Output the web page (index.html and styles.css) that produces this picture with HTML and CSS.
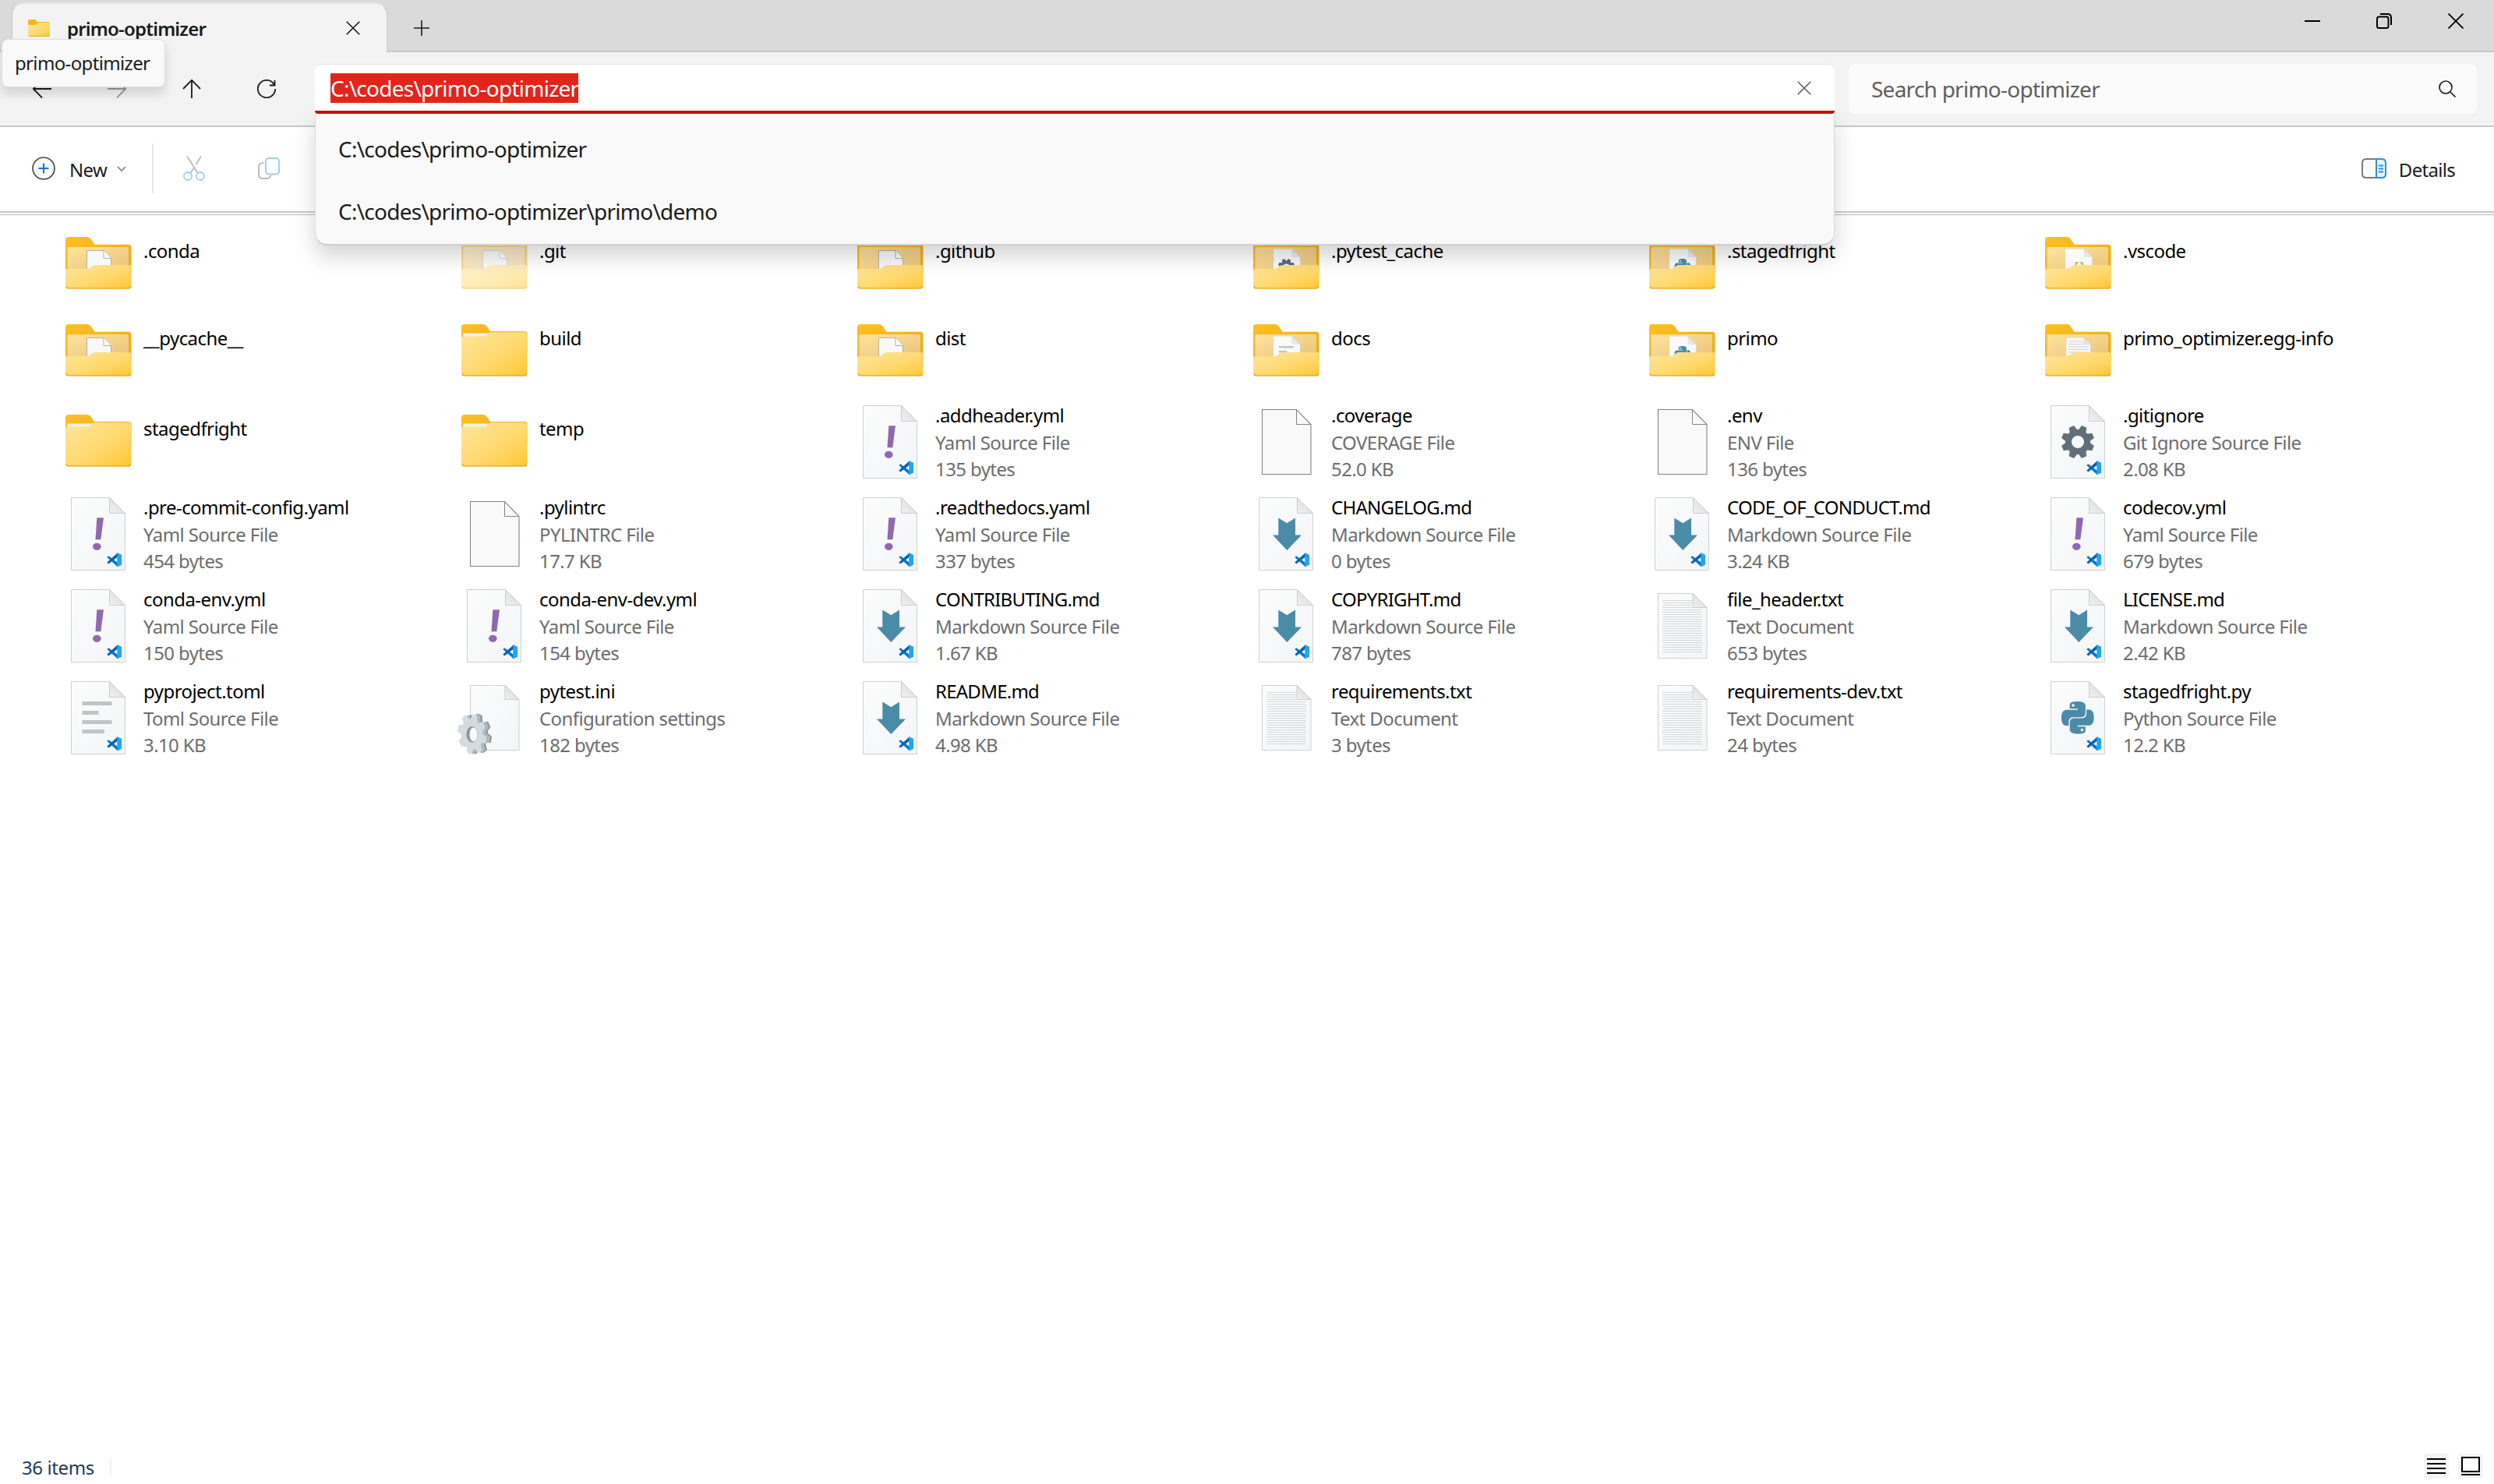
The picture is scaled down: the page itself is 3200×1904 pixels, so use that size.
FILE: index.html
```html
<!DOCTYPE html>
<html lang="en">
<head>
<meta charset="utf-8">
<title>primo-optimizer</title>
<link rel="stylesheet" href="styles.css">
</head>
<body>
<svg class="defs" aria-hidden="true">
  <defs>
    <linearGradient id="gFront" x1="0" y1="0" x2="1" y2="1"><stop offset="0" stop-color="#ffe69c"/><stop offset=".55" stop-color="#ffd970"/><stop offset="1" stop-color="#ffc633"/></linearGradient>
    <linearGradient id="gBack" x1="0" y1="0" x2="1" y2="1"><stop offset="0" stop-color="#ffc021"/><stop offset="1" stop-color="#eaa81b"/></linearGradient>
    <linearGradient id="gInner" x1="0" y1="0" x2="1" y2="1"><stop offset="0" stop-color="#ffe4a0"/><stop offset="1" stop-color="#e9c277"/></linearGradient>
    <linearGradient id="gPage" x1="0" y1="0" x2="1" y2="1"><stop offset="0" stop-color="#fcfcfc"/><stop offset="1" stop-color="#f3f5f7"/></linearGradient>
    <linearGradient id="gFold" x1="0" y1="1" x2="1" y2="0"><stop offset="0" stop-color="#f1f1f1"/><stop offset="1" stop-color="#d6d6d6"/></linearGradient>
    <pattern id="lines" width="51" height="3" patternUnits="userSpaceOnUse"><rect width="51" height="1" fill="#d3d6d8"/></pattern>
  </defs>
  <symbol id="folder" viewBox="0 0 96 96">
    <path d="M6 17a4 4 0 0 1 4-4h24q3 0 5 3l4.500 6.700H87a3.500 3.500 0 0 1 3.500 3.500V50H6z" fill="url(#gBack)"/>
    <path d="M8 24.500h34l-5 5.500H8z" fill="#f1f1ee"/>
    <path d="M6 31q0-2.500 2.500-2.500H35q2.500 0 4-1.500l3-3q1.500-1.700 4-1.700h41.500q3 0 3 3V76q0 3.500-3.500 3.500H9.500Q6 79.500 6 76z" fill="url(#gFront)"/>
    <path d="M7 76.500q.5 2.300 3 2.300h76.500q2.500 0 3-2.300" fill="none" stroke="#eaa627" stroke-width="1.300"/>
    <path d="M42 22.700h45.500q2.300 0 2.800 2" fill="none" stroke="#e6ae35" stroke-width="1"/>
  </symbol>
  <symbol id="openBack" viewBox="0 0 96 96">
    <path d="M6 17a4 4 0 0 1 4-4h24q3 0 5 3l4.500 6.700H87a3.500 3.500 0 0 1 3.500 3.500V60H6z" fill="url(#gBack)"/>
    <path d="M8.500 28q0-2 2-2H85q2 0 2 2v28H8.500z" fill="url(#gInner)"/>
  </symbol>
  <symbol id="openFront" viewBox="0 0 96 96">
    <path d="M6 56.500q0-2.500 2.500-2.500H33q2.500 0 4-1.500l3-2q1.700-1.500 4-1.500h43.500q3 0 3 3V76q0 3.500-3.500 3.500H9.500Q6 79.500 6 76z" fill="url(#gFront)"/>
    <path d="M7 76.500q.5 2.300 3 2.300h76.500q2.500 0 3-2.300" fill="none" stroke="#eaa627" stroke-width="1.300"/>
  </symbol>
  <symbol id="smallPage" viewBox="0 0 96 96">
    <path d="M33.500 30.500h21.500l9.500 10V60h-31z" fill="#f8f8f8" stroke="#a2a2a2" stroke-width=".8"/>
    <path d="M55 30.500v10h9.500" fill="#fdfdfd" stroke="#9c9c9c" stroke-width=".8"/>
  </symbol>
  <symbol id="page" viewBox="0 0 96 96">
    <path d="M13.500 1.500h49l20 20V94.500h-69z" fill="url(#gPage)" stroke="#cfd0d1"/>
    <path d="M62.500 1.500l20 20h-20z" fill="url(#gFold)" stroke="#c4c4c4" stroke-width=".8"/>
  </symbol>
  <symbol id="code" viewBox="0 0 96 96">
    <path d="M59.300 78l2-1.800L73 85v5.300z" fill="#0078c8"/>
    <path d="M59.300 84.600l2 1.800L73 77.600v-5.300z" fill="#0065a9"/>
    <path d="M72.500 72.300L78 74.800v13l-5.500 2.500-1-.8.800-1V74l-.8-.9z" fill="#22a4f0"/>
  </symbol>
  <symbol id="blank" viewBox="0 0 96 96">
    <path d="M17.500 6.500h44l18.500 19V89.500H17.500z" fill="#f9f9f9" stroke="#858585" stroke-width="1.100"/>
    <path d="M61.500 6.500v19H80" fill="none" stroke="#858585"/>
  </symbol>
  <symbol id="text" viewBox="0 0 96 96">
    <path d="M17.500 6.500H62l18 18v65H17.500z" fill="url(#gPage)" stroke="#cfd0d1"/>
    <path d="M23.500 13H61v12h12.500v58h-50z" fill="url(#lines)"/>
    <path d="M62 6.500l18 18H62z" fill="url(#gFold)" stroke="#c4c4c4" stroke-width=".8"/>
  </symbol>
  <symbol id="yamlMark" viewBox="0 0 96 96">
    <path d="M46.300 27.300H55l-3.700 28h-6.800z" fill="#9068b0"/><ellipse cx="46.300" cy="64.300" rx="5.300" ry="4.600" fill="#9068b0"/>
  </symbol>
  <symbol id="mdMark" viewBox="0 0 96 96">
    <path d="M38.300 27.500l11 6.800L60 27.500v22h8L49.300 69 31 49.500h7.300z" fill="#4a8ba8"/>
  </symbol>
  <symbol id="pyMark" viewBox="0 0 96 96">
    <path transform="translate(27 27) scale(1.730)" fill="#4a8ba8" d="M14.250.18l.9.2.73.26.59.3.45.32.34.34.25.34.16.33.1.3.04.26.02.2-.01.13V8.500l-.05.63-.13.55-.21.46-.26.38-.3.31-.33.25-.35.19-.35.14-.33.1-.3.07-.26.04-.21.02H8.770l-.69.05-.59.14-.5.22-.41.27-.33.32-.27.35-.2.36-.15.37-.1.35-.07.32-.04.27-.02.21v3.060H3.170l-.21-.03-.28-.07-.32-.12-.35-.18-.36-.26-.36-.36-.35-.46-.32-.59-.28-.73-.21-.88-.14-1.050-.05-1.230.06-1.220.16-1.040.24-.87.32-.71.36-.57.4-.44.42-.33.42-.24.4-.16.36-.1.32-.05.24-.01h.16l.06.01h8.160v-.83H6.180l-.01-2.750-.02-.37.05-.34.11-.31.17-.28.25-.26.31-.23.38-.2.44-.18.51-.15.58-.12.64-.1.71-.06.77-.04.84-.02 1.270.05zm-6.300 1.980l-.23.33-.08.41.08.41.23.34.33.22.41.09.41-.09.33-.22.23-.34.08-.41-.08-.41-.23-.33-.33-.22-.41-.09-.41.09zm13.090 3.950l.28.06.32.12.35.18.36.27.36.35.35.47.32.59.28.73.21.88.14 1.040.05 1.230-.06 1.230-.16 1.040-.24.86-.32.71-.36.57-.4.45-.42.33-.42.24-.4.16-.36.09-.32.05-.24.02-.16-.01h-8.220v.82h5.840l.01 2.760.02.36-.05.34-.11.31-.17.29-.25.25-.31.24-.38.2-.44.17-.51.15-.58.13-.64.09-.71.07-.77.04-.84.01-1.270-.04-1.070-.14-.9-.2-.73-.25-.59-.3-.45-.33-.34-.34-.25-.34-.16-.33-.1-.3-.04-.25-.02-.2.01-.13v-5.340l.05-.64.13-.54.21-.46.26-.38.3-.32.33-.24.35-.2.35-.14.33-.1.3-.06.26-.04.21-.02.13-.01h5.840l.69-.05.59-.14.5-.21.41-.28.33-.32.27-.35.2-.36.15-.36.1-.35.07-.32.04-.28.02-.21V6.070h2.090l.14.01zm-6.470 14.250l-.23.33-.08.41.08.41.23.33.33.23.41.08.41-.08.33-.23.23-.33.08-.41-.08-.41-.23-.33-.33-.23-.41-.08-.41.08z"/>
  </symbol>
  <symbol id="tomlMark" viewBox="0 0 96 96">
    <path d="M27.500 27h38v5h-38zM27.500 39h21v5h-21zM27.500 51h38v5h-38zM27.500 63h28.500v5H27.500z" fill="#c1c4c3"/>
  </symbol>
  <symbol id="gearMark" viewBox="-24 -24 48 48">
    <g id="cog">
      <circle r="12" fill="none" stroke="currentColor" stroke-width="8"/>
      <g fill="currentColor">
        <path id="t" transform="rotate(22.500)" d="M-5.200-14l1.700-7.200h7L5.200-14z"/>
        <use href="#t" transform="rotate(45)"/><use href="#t" transform="rotate(90)"/><use href="#t" transform="rotate(135)"/><use href="#t" transform="rotate(180)"/><use href="#t" transform="rotate(225)"/><use href="#t" transform="rotate(270)"/><use href="#t" transform="rotate(315)"/>
      </g>
    </g>
  </symbol>

  <symbol id="fPage" viewBox="0 0 96 96"><use href="#openBack"/><use href="#smallPage"/><use href="#openFront"/></symbol>
  <symbol id="fGear" viewBox="0 0 96 96"><use href="#openBack"/><use href="#page" x="25" y="27.500" width="48" height="48"/><use href="#gearMark" x="36.500" y="39.500" width="24" height="24" color="#5c6d75"/><use href="#openFront"/></symbol>
  <symbol id="fPy" viewBox="0 0 96 96"><use href="#openBack"/><g transform="translate(25 27.500) scale(.5)"><use href="#page" width="96" height="96"/><use href="#pyMark" width="96" height="96"/></g><use href="#openFront"/></symbol>
  <symbol id="fToml" viewBox="0 0 96 96"><use href="#openBack"/><g transform="translate(25 27.500) scale(.5)"><use href="#page" width="96" height="96"/><use href="#tomlMark" width="96" height="96"/></g><use href="#openFront"/></symbol>
  <symbol id="fJson" viewBox="0 0 96 96"><use href="#openBack"/><use href="#page" x="25" y="27.500" width="48" height="48"/><text x="41" y="55" class="braces">{}</text><use href="#openFront"/></symbol>
  <symbol id="fText" viewBox="0 0 96 96"><use href="#openBack"/><path d="M33 30h22l9.500 9.500V60H33z" fill="#f8f8f8" stroke="#d5d5d5" stroke-width=".8"/><path d="M36 35h18M36 38.500h18M36 42h25.500M36 45.500h25.500M36 49h25.500" stroke="#d0d0d0"/><path d="M55 30v9.500h9.500z" fill="#e3e3e3"/><use href="#openFront"/></symbol>
  <symbol id="yaml" viewBox="0 0 96 96"><use href="#page"/><use href="#yamlMark"/><use href="#code"/></symbol>
  <symbol id="md" viewBox="0 0 96 96"><use href="#page"/><use href="#mdMark"/><use href="#code"/></symbol>
  <symbol id="py" viewBox="0 0 96 96"><use href="#page"/><use href="#pyMark"/><use href="#code"/></symbol>
  <symbol id="toml" viewBox="0 0 96 96"><use href="#page"/><use href="#tomlMark"/><use href="#code"/></symbol>
  <symbol id="git" viewBox="0 0 96 96"><use href="#page"/><use href="#gearMark" x="24" y="24" width="48" height="48" color="#617078"/><use href="#code"/></symbol>
  <symbol id="ini" viewBox="0 0 96 96">
    <path d="M17.500 6.500H62l18 18v65H17.500z" fill="url(#gPage)" stroke="#cfd0d1"/>
    <path d="M62 6.500l18 18H62z" fill="url(#gFold)" stroke="#c4c4c4" stroke-width=".8"/>
    <g color="#8d9599"><use href="#cog" transform="translate(26 68.500) rotate(-8) scale(.88 1.220)"/></g>
    <g color="#b0b8bd"><use href="#cog" transform="translate(23.500 68.800) rotate(-8) scale(.9 1.230)"/></g>
    <g color="#d3dbe1"><use href="#cog" transform="translate(19.700 69) rotate(-8) scale(.86 1.230)"/></g>
    <ellipse cx="19.700" cy="69.300" rx="7.300" ry="10.300" fill="#8f9599"/><ellipse cx="21.500" cy="69.300" rx="5" ry="9" fill="#f8f9fa"/>
  </symbol>
</svg>

<div class="window">
  <header class="titlebar">
    <div class="tab">
      <svg class="tab-icon" viewBox="0 0 28 24"><path d="M0 3q0-2 2-2h7l3 3h14q2 0 2 2v16H0z" fill="#f9b51c"/><path d="M0 8h10l3-3h13q2 0 2 2v14q0 2-2 2H2q-2 0-2-2z" fill="url(#gFront)"/><path d="M.5 22.300h27" stroke="#eaa627"/></svg>
      <span class="tab-title">primo-optimizer</span>
      <svg class="tab-close" viewBox="0 0 18 18"><path d="M.7.7l16.600 16.600M17.300.7L.7 17.300"/></svg>
    </div>
    <svg class="tab-add" viewBox="0 0 20 20"><path d="M10 0v20M0 10h20"/></svg>
    <div class="controls">
      <svg viewBox="0 0 20 20"><path d="M0 10h20" stroke-width="2"/></svg>
      <svg viewBox="0 0 20 20"><rect x="1" y="4.500" width="14.500" height="14.500" rx="2.500" stroke-width="2"/><path d="M5 1h9.500q4.500 0 4.500 4.500V15" stroke-width="2"/></svg>
      <svg viewBox="0 0 20 20"><path d="M.5.500l19 19M19.500.500l-19 19" stroke-width="1.800"/></svg>
    </div>
  </header>

  <div class="toolbar">
    <nav class="nav">
      <svg viewBox="0 0 24 24"><path d="M24 12H1M12 .500L.800 12 12 23.500"/></svg>
      <svg viewBox="0 0 24 24" class="off"><path d="M0 12h23M12 .500L23.200 12 12 23.500"/></svg>
      <svg viewBox="0 0 24 24"><path d="M12 24V1M1 12L12 .800 23 12"/></svg>
      <svg viewBox="0 0 24 24"><path d="M22 7A11.200 11.200 0 1 0 23.200 12M22.500 1v6.500H16"/></svg>
    </nav>
    <div class="address">
      <span class="path">C:\codes\primo-optimizer</span>
      <svg class="clear" viewBox="0 0 18 18"><path d="M.7.7l16.600 16.600M17.300.7L.7 17.300"/></svg>
      <ul class="suggestions">
        <li>C:\codes\primo-optimizer</li>
        <li>C:\codes\primo-optimizer\primo\demo</li>
      </ul>
    </div>
    <div class="search">
      <span>Search primo-optimizer</span>
      <svg viewBox="0 0 22 22"><circle cx="9" cy="9" r="8"/><path d="M15 15l6.500 6.500"/></svg>
    </div>
    <div class="tooltip">primo-optimizer</div>
  </div>

  <div class="commands">
    <svg class="ic-new" viewBox="0 0 30 30"><circle cx="15" cy="15" r="14" fill="#fafafa" stroke="#4d4d4d" stroke-width="1.700"/><path d="M15 8.500v13M8.500 15h13" stroke="#0078d4" stroke-width="2"/></svg>
    <span class="new">New</span>
    <svg class="chev" viewBox="0 0 12 7"><path d="M1 1l5 5 5-5"/></svg>
    <i class="rule"></i>
    <svg class="ic-cut" viewBox="0 0 28 32"><path d="M5 .500l13.500 21M23 .500L16.500 11M14.500 14.500l-5 7" stroke="#b9b9b9"/><circle cx="6" cy="26" r="5" stroke="#9fcdf1"/><circle cx="22" cy="26" r="5" stroke="#9fcdf1"/></svg>
    <svg class="ic-copy" viewBox="0 0 28 28"><path d="M7.500 7Q1 7 1 12v10q0 5 5 5h5q4.500 0 5.500-4" stroke="#bcbcbc"/><rect x="10" y="1" width="17" height="20.500" rx="4" stroke="#9fcdf1"/></svg>
    <svg class="ic-details" viewBox="0 0 32 26"><path d="M19 1H6Q1 1 1 6v14q0 5 5 5h13" fill="#fafafa" stroke="#7b7b7b"/><path d="M19 1h7q5 0 5 5v14q0 5-5 5h-7z" fill="#e8f4fd" stroke="#2b8fe0"/><path d="M22 9.500h6M22 13.500h6M22 17.500h6" stroke="#2b8fe0"/></svg>
    <span class="details">Details</span>
  </div>

  <main class="files">
    <div class="item folder"><svg><use href="#fPage"/></svg><p>.conda</p></div>
    <div class="item folder hidden"><svg><use href="#fPage"/></svg><p>.git</p></div>
    <div class="item folder"><svg><use href="#fPage"/></svg><p>.github</p></div>
    <div class="item folder"><svg><use href="#fGear"/></svg><p>.pytest_cache</p></div>
    <div class="item folder"><svg><use href="#fPy"/></svg><p>.stagedfright</p></div>
    <div class="item folder"><svg><use href="#fJson"/></svg><p>.vscode</p></div>

    <div class="item folder"><svg><use href="#fPage"/></svg><p>__pycache__</p></div>
    <div class="item folder"><svg><use href="#folder"/></svg><p>build</p></div>
    <div class="item folder"><svg><use href="#fPage"/></svg><p>dist</p></div>
    <div class="item folder"><svg><use href="#fToml"/></svg><p>docs</p></div>
    <div class="item folder"><svg><use href="#fPy"/></svg><p>primo</p></div>
    <div class="item folder"><svg><use href="#fText"/></svg><p>primo_optimizer.egg-info</p></div>

    <div class="item folder"><svg><use href="#folder"/></svg><p>stagedfright</p></div>
    <div class="item folder"><svg><use href="#folder"/></svg><p>temp</p></div>
    <div class="item"><svg><use href="#yaml"/></svg><p>.addheader.yml<small>Yaml Source File</small><small>135 bytes</small></p></div>
    <div class="item"><svg><use href="#blank"/></svg><p>.coverage<small>COVERAGE File</small><small>52.0 KB</small></p></div>
    <div class="item"><svg><use href="#blank"/></svg><p>.env<small>ENV File</small><small>136 bytes</small></p></div>
    <div class="item"><svg><use href="#git"/></svg><p>.gitignore<small>Git Ignore Source File</small><small>2.08 KB</small></p></div>

    <div class="item"><svg><use href="#yaml"/></svg><p>.pre-commit-config.yaml<small>Yaml Source File</small><small>454 bytes</small></p></div>
    <div class="item"><svg><use href="#blank"/></svg><p>.pylintrc<small>PYLINTRC File</small><small>17.7 KB</small></p></div>
    <div class="item"><svg><use href="#yaml"/></svg><p>.readthedocs.yaml<small>Yaml Source File</small><small>337 bytes</small></p></div>
    <div class="item caps"><svg><use href="#md"/></svg><p>CHANGELOG.md<small>Markdown Source File</small><small>0 bytes</small></p></div>
    <div class="item caps"><svg><use href="#md"/></svg><p>CODE_OF_CONDUCT.md<small>Markdown Source File</small><small>3.24 KB</small></p></div>
    <div class="item"><svg><use href="#yaml"/></svg><p>codecov.yml<small>Yaml Source File</small><small>679 bytes</small></p></div>

    <div class="item"><svg><use href="#yaml"/></svg><p>conda-env.yml<small>Yaml Source File</small><small>150 bytes</small></p></div>
    <div class="item"><svg><use href="#yaml"/></svg><p>conda-env-dev.yml<small>Yaml Source File</small><small>154 bytes</small></p></div>
    <div class="item caps"><svg><use href="#md"/></svg><p>CONTRIBUTING.md<small>Markdown Source File</small><small>1.67 KB</small></p></div>
    <div class="item caps"><svg><use href="#md"/></svg><p>COPYRIGHT.md<small>Markdown Source File</small><small>787 bytes</small></p></div>
    <div class="item"><svg><use href="#text"/></svg><p>file_header.txt<small>Text Document</small><small>653 bytes</small></p></div>
    <div class="item caps"><svg><use href="#md"/></svg><p>LICENSE.md<small>Markdown Source File</small><small>2.42 KB</small></p></div>

    <div class="item"><svg><use href="#toml"/></svg><p>pyproject.toml<small>Toml Source File</small><small>3.10 KB</small></p></div>
    <div class="item"><svg><use href="#ini"/></svg><p>pytest.ini<small>Configuration settings</small><small>182 bytes</small></p></div>
    <div class="item caps"><svg><use href="#md"/></svg><p>README.md<small>Markdown Source File</small><small>4.98 KB</small></p></div>
    <div class="item"><svg><use href="#text"/></svg><p>requirements.txt<small>Text Document</small><small>3 bytes</small></p></div>
    <div class="item"><svg><use href="#text"/></svg><p>requirements-dev.txt<small>Text Document</small><small>24 bytes</small></p></div>
    <div class="item"><svg><use href="#py"/></svg><p>stagedfright.py<small>Python Source File</small><small>12.2 KB</small></p></div>
  </main>

  <footer class="status">
    <span>36 items</span><i></i>
    <svg viewBox="0 0 32 32"><path d="M4 7h24M4 13h24M4 19h24M4 25h24"/></svg>
    <svg viewBox="0 0 32 32"><rect x="5" y="5" width="22" height="18" fill="#fff"/><path d="M4 27h24"/></svg>
  </footer>
</div>
</body>
</html>
```
FILE: styles.css
```css
* { box-sizing: border-box; }
body {
  margin: 0;
  background: #fff;
  color: #1b1b1b;
  font-family: "Noto Sans", "Open Sans", sans-serif;
  font-size: 24px;
}
svg { display: block; flex: none; fill: none; stroke: none; }
.defs { position: absolute; width: 0; height: 0; }
.window { width: 3200px; height: 1904px; display: flex; flex-direction: column; overflow: hidden; }

.titlebar {
  height: 67px;
  flex: none;
  display: flex;
  align-items: flex-start;
  background: #dadada;
  padding-left: 15px;
  box-shadow: inset 0 -2px #c9c9c9;
}
.tab {
  width: 482px;
  height: 64px;
  margin-top: 3px;
  display: flex;
  align-items: center;
  background: #f3f3f3;
  border: 1px solid #c9c9c9;
  border-top: 2px solid #e4e4e4;
  border-bottom: 0;
  border-radius: 16px 16px 0 0;
  padding: 0 34px 0 20px;
}
.tab-icon { width: 28px; height: 24px; }
.tab-title { margin-left: 22px; margin-top: 2px; font-weight: 600; line-height: 34px; letter-spacing: -0.8px; }
.tab-close { width: 18px; height: 18px; margin-left: auto; stroke: #1b1b1b; stroke-width: 1.6; }
.tab-add { width: 20px; height: 20px; margin: 26px 0 0 34px; stroke: #1b1b1b; stroke-width: 1.6; }
.controls { margin: 17px 39px 0 auto; display: flex; gap: 72px; }
.controls svg { width: 20px; height: 20px; stroke: #000; }

.toolbar {
  position: relative;
  height: 96px;
  flex: none;
  display: flex;
  align-items: flex-start;
  background: #f3f3f3;
  border-bottom: 2px solid #c8c8c8;
  padding-top: 15px;
}
.nav { display: flex; gap: 72px; padding: 20px 0 0 42px; width: 404px; flex: none; }
.nav svg { width: 24px; height: 24px; stroke: #1b1b1b; stroke-width: 1.8; }
.nav .off { stroke: #9a9a9a; }
.address {
  position: relative;
  width: 1950px;
  height: 64px;
  display: flex;
  align-items: center;
  background: #fff;
  border-top: 1px solid #e6e6e6;
  border-bottom: 4px solid #c41411;
  border-radius: 8px 8px 4px 4px;
  padding: 0 30px 0 20px;
}
.path { height: 38px; line-height: 38px; font-size: 28px; letter-spacing: -0.75px; color: #fff; background: #e3241b; }
.clear { width: 18px; height: 18px; margin-left: auto; stroke: #5c5c5c; stroke-width: 1.5; }
.suggestions {
  position: absolute;
  z-index: 5;
  left: 0;
  top: 63px;
  width: 1950px;
  height: 169px;
  margin: 0;
  padding: 6px 29px;
  list-style: none;
  background: #f9f9f9;
  border: 1px solid #dcdcdc;
  border-top: 0;
  border-bottom: 2px solid #cfcfcf;
  border-radius: 0 0 16px 16px;
  box-shadow: 0 14px 28px rgba(0, 0, 0, .17);
}
.suggestions li { height: 80px; line-height: 78px; font-size: 28px; letter-spacing: -0.75px; }
.search {
  width: 806px;
  height: 64px;
  margin-left: 18px;
  display: flex;
  align-items: center;
  justify-content: space-between;
  background: #fbfbfb;
  border-radius: 8px;
  padding: 0 27px 0 29px;
  color: #5f5f5f;
  font-size: 28px;
  letter-spacing: -0.75px;
}
.search svg { width: 22px; height: 22px; stroke: #1b1b1b; stroke-width: 1.6; }
.tooltip {
  position: absolute;
  left: 2px;
  top: -17px;
  width: 210px;
  height: 62px;
  padding-left: 16px;
  line-height: 60px;
  letter-spacing: -0.65px;
  background: #f9f9f9;
  border: 1px solid #dedede;
  border-radius: 8px;
  box-shadow: 0 8px 14px rgba(0, 0, 0, .14);
}

.commands {
  height: 113px;
  flex: none;
  display: flex;
  align-items: center;
  padding: 0 50px 6px 41px;
  background: linear-gradient(#c8c8c8, #c8c8c8) 0 108px / 100% 2px no-repeat, #fff;
  border-bottom: 1px solid #b9b9b9;
  letter-spacing: -0.7px;
}
.ic-new { width: 30px; height: 30px; }
.new { margin: 4px 0 0 18px; line-height: 34px; }
.chev { width: 12px; height: 7px; margin-left: 13px; stroke: #777; stroke-width: 1.5; }
.rule { width: 2px; height: 64px; margin-left: 33px; background: #e8e8e8; }
.ic-cut { width: 28px; height: 32px; margin-left: 38px; stroke-width: 1.8; }
.ic-copy { width: 28px; height: 28px; margin-left: 68px; stroke-width: 2; }
.ic-details { width: 32px; height: 26px; margin-left: auto; stroke-width: 2; }
.details { margin: 4px 0 0 16px; line-height: 34px; }

.files {
  flex: 1;
  display: grid;
  grid-template-columns: repeat(6, 508px);
  grid-template-rows: 112px 116px 118px 118px 118px 118px;
  padding: 15px 0 0 78px;
}
.item { display: flex; align-items: flex-start; }
.item > svg { width: 96px; height: 96px; overflow: visible; }
.item p { margin: -3px 0 0 10px; color: #000; line-height: 34px; letter-spacing: -0.55px; white-space: nowrap; }
.item.caps p { letter-spacing: -0.75px; }
.item small { display: block; font-size: 24px; color: #6d6d6d; letter-spacing: -0.6px; }
.item small:first-of-type { margin-top: 1px; }
.item.folder p { margin-top: 14px; }
.hidden > svg { opacity: .5; }
.braces { font: bold 13px "DejaVu Sans", sans-serif; fill: #b7b73b; letter-spacing: -1px; }

.status { height: 40px; flex: none; display: flex; align-items: flex-start; padding: 1px 14px 0 28px; color: #1e395b; }
.status span { line-height: 36px; letter-spacing: -0.4px; }
.status i { width: 2px; height: 22px; margin: 6px auto 0 20px; background: #f0f0f0; }
.status svg { width: 32px; height: 32px; margin-left: 12px; background: #f4f4f4; border-radius: 4px; stroke: #000; stroke-width: 2; }
```
